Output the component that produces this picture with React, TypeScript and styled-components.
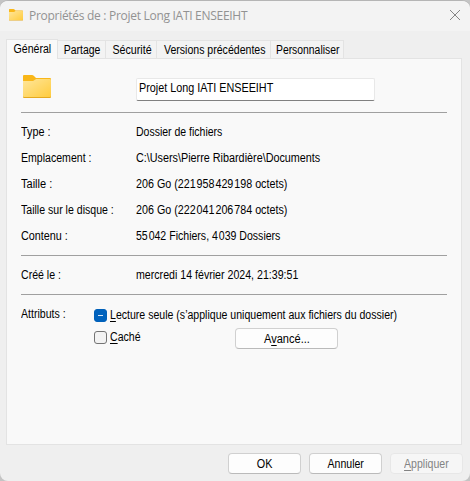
import React from "react";
import styled, { createGlobalStyle } from "styled-components";

const GlobalStyle = createGlobalStyle`
  * { box-sizing: border-box; }
  html, body { margin: 0; padding: 0; background: #c4c4c4; overflow: hidden; }
  body { font-family: "Liberation Sans", Arial, sans-serif; font-size: 12px; line-height: 16px; color: #000; }
`;

const Dialog = styled.main`
  width: 470px;
  height: 481px;
  display: flex;
  flex-direction: column;
  background: #efefef;
  border-top: 1px solid #b5b5b5;
  border-radius: 8px;
  overflow: hidden;
`;

const TitleBar = styled.header`
  height: 30px;
  flex: none;
  display: flex;
  align-items: center;
  padding: 0 9px 2px 8px;
  background: #f3f3f3;
`;

const Title = styled.h1`
  flex: 1;
  margin: 2px 0 0 5px;
  font: 400 12px/16px "Open Sans", "Noto Sans", sans-serif;
  letter-spacing: -0.29px;
  color: #929292;
  white-space: nowrap;
`;

const Label = styled.span<{ $scale?: number; $centered?: boolean }>`
  display: inline-block;
  white-space: pre;
  transform: scaleX(${(p) => p.$scale ?? 0.88});
  transform-origin: ${(p) => (p.$centered ? "center" : "left")};
`;

const Key = styled.span`
  text-decoration: underline;
  text-underline-offset: 2px;
  text-decoration-thickness: 1px;
  text-decoration-skip-ink: none;
`;

const Tabs = styled.nav`
  height: 27px;
  flex: none;
  display: flex;
  align-items: flex-end;
  padding-left: 6px;
`;

const Tab = styled.button<{ $width: number; $active?: boolean }>`
  width: ${(p) => p.$width}px;
  height: ${(p) => (p.$active ? 20 : 18)}px;
  margin: 0 0 ${(p) => (p.$active ? -1 : 0)}px;
  padding: ${(p) => (p.$active ? "0 0 1px" : "1px 0 0 2px")};
  z-index: ${(p) => (p.$active ? 1 : 0)};
  display: flex;
  align-items: center;
  justify-content: center;
  font: inherit;
  color: #000;
  background: ${(p) => (p.$active ? "#f9f9f9" : "#f3f3f3")};
  border: 1px solid #e3e3e3;
  border-left-width: ${(p) => (p.$active ? 1 : 0)}px;
  border-bottom: 0;
`;

const Panel = styled.section`
  width: 456px;
  height: 387px;
  flex: none;
  margin-left: 6px;
  padding: 15px 14px 0;
  background: #f9f9f9;
  border: 1px solid #e3e3e3;
`;

const NameRow = styled.div`
  height: 38px;
  display: flex;
  align-items: flex-start;
`;

const IconCell = styled.div`
  width: 115px;
  margin-top: -3px;
  display: flex;
`;

const NameField = styled.div`
  width: 239px;
  height: 23px;
  margin-top: 4px;
  padding: 1px 2px;
  background: #fff;
  border: 1px solid #e8e8e8;
  border-bottom-color: #808080;
  border-radius: 2px;
`;

const Rule = styled.hr`
  height: 1px;
  margin: 0;
  border: 0;
  background: #a0a0a0;
`;

const Details = styled.dl<{ $height: number }>`
  height: ${(p) => p.$height}px;
  margin: 0;
  padding-top: 6px;
`;

const Detail = styled.div`
  height: 26px;
  display: grid;
  grid-template-columns: 114.5px 1fr;
  align-items: center;
`;

const Term = styled.dt`
  display: flex;
`;

const Value = styled.dd`
  margin: 0;
  display: flex;
`;

const Attributes = styled.div`
  display: grid;
  grid-template-columns: 73px 1fr;
  padding-top: 11px;
`;

const Options = styled.div`
  display: flex;
  flex-direction: column;
  gap: 5px;
  padding-top: 1px;
`;

const OptionRow = styled.div`
  display: flex;
  align-items: flex-start;
`;

const Check = styled.label<{ $width?: number }>`
  width: ${(p) => (p.$width ? `${p.$width}px` : "auto")};
  padding-top: ${(p) => (p.$width ? 1 : 0)}px;
  display: flex;
  align-items: center;
  gap: 3px;
`;

const Box = styled.span<{ $mixed?: boolean }>`
  width: 13px;
  height: 13px;
  flex: none;
  display: flex;
  align-items: center;
  justify-content: center;
  border: 1px solid ${(p) => (p.$mixed ? "#0060b9" : "#747474")};
  border-radius: 3px;
  background: ${(p) => (p.$mixed ? "#0062bd" : "#f3f3f3")};
`;

const Dash = styled.span`
  width: 5px;
  height: 1px;
  background: #d5e6f6;
`;

const Button = styled.button<{ $width: number }>`
  width: ${(p) => p.$width}px;
  height: 21px;
  padding: 0;
  display: flex;
  align-items: center;
  justify-content: center;
  font: inherit;
  color: #000;
  background: #fdfdfd;
  border: 1px solid #d0d0d0;
  border-bottom-color: #bababa;
  border-radius: 4px;
  &:disabled { color: #838383; background: #f6f6f6; border-color: #e7e7e7; }
`;

const Footer = styled.footer`
  display: flex;
  justify-content: flex-end;
  gap: 8px;
  padding: 8px 7px 0 0;
`;

const FolderIcon = ({ size, id }: { size: number; id: string }) => (
  <svg width={size} height={size} viewBox="0 0 32 32">
    <defs>
      <linearGradient id={id} x1="0" y1="0" x2="1" y2="1">
        <stop offset="0" stopColor="#ffe69b" />
        <stop offset="1" stopColor="#ffcc3e" />
      </linearGradient>
    </defs>
    <path d="M2 5Q2 4 3 4H11Q12 4 13 5L15 7H29Q30 7 30 8V16H2Z" fill="#f9b719" />
    <path d="M2 10H12L15 8H29Q30 8 30 9V26Q30 27 29 27H3Q2 27 2 26Z" fill="#e5a91f" />
    <path d="M2 10H12L15 8H29Q30 8 30 9V25.2Q30 26 29 26H3Q2 26 2 25.2Z" fill={`url(#${id})`} />
  </svg>
);

const CloseIcon = () => (
  <svg width="12" height="12" viewBox="0 0 12 12" stroke="#858585" strokeWidth="1">
    <path d="M1 1L11 11M11 1L1 11" />
  </svg>
);

const tabs = [
  { text: "Général", width: 52, scale: 0.88, active: true },
  { text: "Partage", width: 48, scale: 0.87 },
  { text: "Sécurité", width: 51, scale: 0.89 },
  { text: "Versions précédentes", width: 114, scale: 0.88 },
  { text: "Personnaliser", width: 73, scale: 0.865 },
];

const details = [
  { term: "Type :", ts: 0.9, value: "Dossier de fichiers", vs: 0.875 },
  { term: "Emplacement :", ts: 0.88, value: "C:\\Users\\Pierre Ribardière\\Documents", vs: 0.9 },
  { term: "Taille :", ts: 0.92, value: "206 Go (221\u200a958\u200a429\u200a198 octets)", vs: 0.895 },
  { term: "Taille sur le disque :", ts: 0.88, value: "206 Go (222\u200a041\u200a206\u200a784 octets)", vs: 0.895 },
  { term: "Contenu :", ts: 0.9, value: "55\u200a042 Fichiers, 4\u200a039 Dossiers", vs: 0.88 },
];

export default function App() {
  return (
    <>
      <GlobalStyle />
      <Dialog>
        <TitleBar>
          <FolderIcon size={16} id="folder-small" />
          <Title>Propriétés de : Projet Long IATI ENSEEIHT</Title>
          <CloseIcon />
        </TitleBar>
        <Tabs>
          {tabs.map((t) => (
            <Tab key={t.text} $width={t.width} $active={t.active}>
              <Label $centered $scale={t.scale}>{t.text}</Label>
            </Tab>
          ))}
        </Tabs>
        <Panel>
          <NameRow>
            <IconCell><FolderIcon size={32} id="folder-large" /></IconCell>
            <NameField><Label $scale={0.9}>Projet Long IATI ENSEEIHT</Label></NameField>
          </NameRow>
          <Rule />
          <Details $height={142}>
            {details.map((d) => (
              <Detail key={d.term}>
                <Term><Label $scale={d.ts}>{d.term}</Label></Term>
                <Value><Label $scale={d.vs}>{d.value}</Label></Value>
              </Detail>
            ))}
          </Details>
          <Rule />
          <Details $height={38}>
            <Detail>
              <Term><Label>Créé le :</Label></Term>
              <Value><Label $scale={0.885}>mercredi 14 février 2024, 21:39:51</Label></Value>
            </Detail>
          </Details>
          <Rule />
          <Attributes>
            <Label>Attributs :</Label>
            <Options>
              <Check>
                <Box $mixed><Dash /></Box>
                <Label><Key>L</Key>ecture seule (s’applique uniquement aux fichiers du dossier)</Label>
              </Check>
              <OptionRow>
                <Check $width={141}><Box /><Label><Key>C</Key>aché</Label></Check>
                <Button $width={103}><Label $centered $scale={0.92}>A<Key>v</Key>ancé...</Label></Button>
              </OptionRow>
            </Options>
          </Attributes>
        </Panel>
        <Footer>
          <Button $width={73}><Label $centered $scale={0.9}>OK</Label></Button>
          <Button $width={73}><Label $centered>Annuler</Label></Button>
          <Button $width={73} disabled><Label $centered><Key>A</Key>ppliquer</Label></Button>
        </Footer>
      </Dialog>
    </>
  );
}
